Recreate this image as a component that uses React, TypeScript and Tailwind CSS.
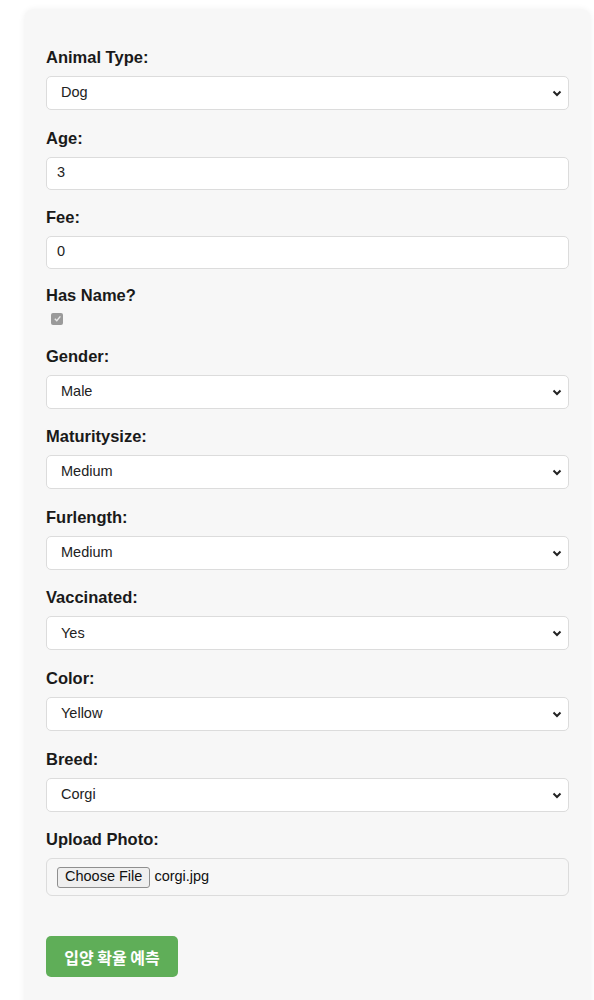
import React from "react";

const font = { fontFamily: '"Liberation Sans", Arial, sans-serif' };

function Label({ children }: { children: React.ReactNode }) {
  return (
    <div className="h-[20px] leading-[20px] text-[16.5px] font-bold text-[#1a1a1a] mb-[9px]">
      {children}
    </div>
  );
}

function Select({ value }: { value: string }) {
  return (
    <div className="relative h-[34px] w-full rounded-[5px] border border-[#dcdcdc] bg-white flex items-center pl-[14px] text-[14.5px] text-[#222]">
      <span>{value}</span>
      <svg
        className="absolute right-[6px] top-1/2 -translate-y-1/2"
        width="10"
        height="8"
        viewBox="0 0 10 8"
      >
        <path d="M1.5 2.5 L5 6 L8.5 2.5" fill="none" stroke="#222" strokeWidth="2" />
      </svg>
    </div>
  );
}

function Input({ value }: { value: string }) {
  return (
    <div className="h-[33px] w-full rounded-[5px] border border-[#dcdcdc] bg-white flex items-center pl-[10px] text-[14.5px] text-[#222]">
      {value}
    </div>
  );
}

function Field({ label, children, mb = "mb-[17.6px]" }: { label: string; children: React.ReactNode; mb?: string }) {
  return (
    <div className={mb}>
      <Label>{label}</Label>
      {children}
    </div>
  );
}

export default function App() {
  return (
    <div className="min-h-[1000px] bg-white pt-[9px] pl-[24px] pr-[3px]" style={font}>
      <div className="w-[567px] rounded-[10px] bg-[#f7f7f7] shadow-[0_0_6px_rgba(0,0,0,0.06)] pt-[38px] px-[22px] pb-[40px]">
        <Field label="Animal Type:">
          <Select value="Dog" />
        </Field>
        <Field label="Age:" mb="mb-[17px]">
          <Input value="3" />
        </Field>
        <Field label="Fee:" mb="mb-[16px]">
          <Input value="0" />
        </Field>
        <div className="mb-[21px]">
          <div className="h-[20px] leading-[20px] text-[16.5px] font-bold text-[#1a1a1a] mb-[8px]">
            Has Name?
          </div>
          <div className="ml-[5px] w-[12px] h-[12px] rounded-[2px] bg-[#9a9a9a] flex items-center justify-center">
            <svg width="9" height="9" viewBox="0 0 10 10">
              <path d="M2 5.2 L4.2 7.4 L8.2 2.6" fill="none" stroke="#e8e8e8" strokeWidth="1.6" />
            </svg>
          </div>
        </div>
        <Field label="Gender:">
          <Select value="Male" />
        </Field>
        <Field label="Maturitysize:">
          <Select value="Medium" />
        </Field>
        <Field label="Furlength:">
          <Select value="Medium" />
        </Field>
        <Field label="Vaccinated:">
          <Select value="Yes" />
        </Field>
        <Field label="Color:">
          <Select value="Yellow" />
        </Field>
        <Field label="Breed:">
          <Select value="Corgi" />
        </Field>
        <div className="mb-[40px]">
          <Label>Upload Photo:</Label>
          <div className="h-[38px] w-full rounded-[6px] border border-[#dcdcdc] bg-[#f7f7f7] flex items-center pl-[10px] text-[14.5px] text-[#111]">
            <span className="h-[21px] px-[7px] flex items-center rounded-[3px] border border-[#8f8f8f] bg-[#efefef] text-[14.5px]">
              Choose File
            </span>
            <span className="ml-[4px]">corgi.jpg</span>
          </div>
        </div>
        <button
          className="h-[41px] w-[132px] rounded-[5px] bg-[#5fae58] text-white text-[16px] font-bold"
          style={{ fontFamily: '"Noto Sans CJK KR", "Liberation Sans", sans-serif' }}
        >
          입양 확율 예측
        </button>
      </div>
    </div>
  );
}
